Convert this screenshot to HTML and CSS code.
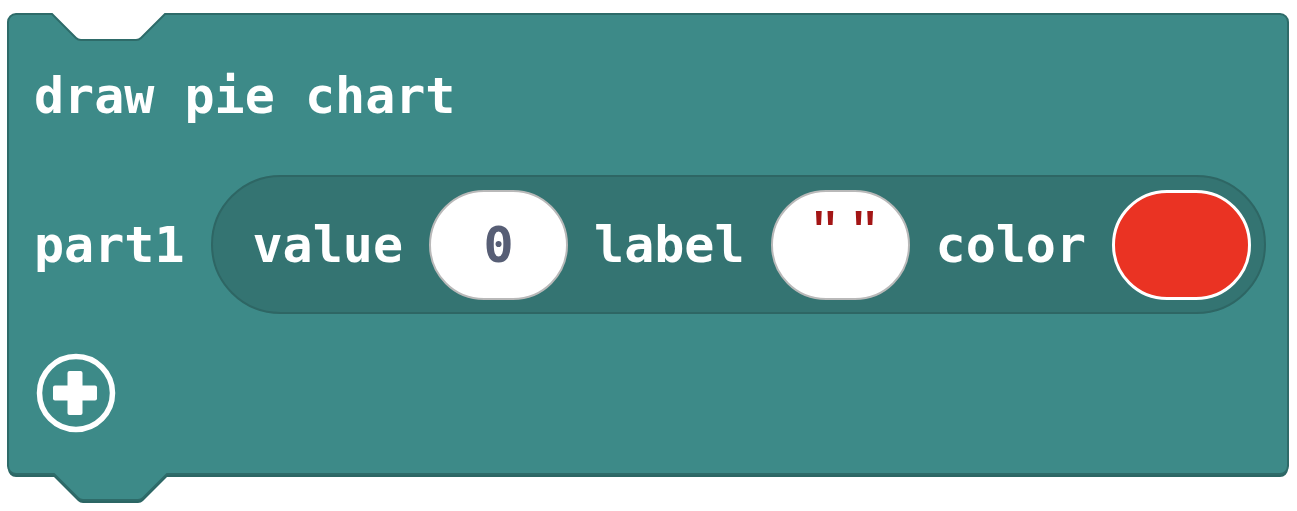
FILE: index.html
```html
<!DOCTYPE html>
<html>
<head>
<meta charset="utf-8">
<link rel="stylesheet" href="styles.css">
</head>
<body>
<div class="stage">
  <div class="block">
    <svg class="shape" width="1284" height="494" viewBox="0 0 1284 494">
      <path class="shadow" transform="translate(0,3)" d="M1,9 A8,8 0 0 1 9,1 H45 L69,25 Q71,27 74,27 H129 Q132,27 134,25 L158,1 H1273 A8,8 0 0 1 1281,9 V453 A8,8 0 0 1 1273,461 H160 L136,485 Q134,487 131,487 H76 Q73,487 71,485 L47,461 H9 A8,8 0 0 1 1,453 Z"/>
      <path class="body" d="M1,9 A8,8 0 0 1 9,1 H45 L69,25 Q71,27 74,27 H129 Q132,27 134,25 L158,1 H1273 A8,8 0 0 1 1281,9 V453 A8,8 0 0 1 1273,461 H160 L136,485 Q134,487 131,487 H76 Q73,487 71,485 L47,461 H9 A8,8 0 0 1 1,453 Z"/>
    </svg>
    <div class="content">
      <div class="title">draw pie chart</div>
      <div class="part-row">
        <span class="word">part1</span>
        <div class="pill">
          <span class="word">value</span>
          <div class="field num">0</div>
          <span class="word">label</span>
          <div class="field text"><span class="q">"</span><span class="q">"</span></div>
          <span class="word">color</span>
          <div class="field swatch"></div>
        </div>
      </div>
      <div class="add-row">
        <svg class="plus" width="80" height="80" viewBox="0 0 80 80">
          <circle cx="40" cy="40" r="36.5" fill="none" stroke="#ffffff" stroke-width="5.5"/>
          <rect x="17" y="32.5" width="44" height="15" rx="2" fill="#ffffff"/>
          <rect x="31.5" y="18" width="15" height="44" rx="2" fill="#ffffff"/>
        </svg>
      </div>
    </div>
  </div>
</div>
</body>
</html>
```

FILE: styles.css
```css
html, body {
  margin: 0;
  padding: 0;
  background: #ffffff;
}

.stage {
  padding: 13px 0 4px 7px;
}

.block {
  position: relative;
  width: 1284px;
  height: 494px;
}

.shape {
  position: absolute;
  left: 0;
  top: 0;
  overflow: visible;
}

.shape .shadow {
  fill: #2c6664;
}

.shape .body {
  fill: #3d8a88;
  stroke: #2e6b69;
  stroke-width: 2;
}

.content {
  position: relative;
  display: flex;
  flex-direction: column;
  align-items: flex-start;
  padding: 54px 0 0 27px;
  font-family: "DejaVu Sans Mono", "Liberation Mono", monospace;
  font-weight: bold;
  font-size: 50px;
  line-height: 58px;
  color: #ffffff;
}

.title {
  height: 58px;
  white-space: pre;
}

.part-row {
  display: flex;
  align-items: center;
  gap: 26px;
  margin-top: 50px;
}

.word {
  white-space: pre;
}

.pill {
  display: flex;
  align-items: center;
  gap: 26px;
  height: 135px;
  padding: 0 13px 0 40px;
  background: #347472;
  border: 2px solid #2e6664;
  border-radius: 70px;
}

.field {
  box-sizing: border-box;
  width: 139px;
  height: 110px;
  border-radius: 55px;
  display: flex;
  justify-content: center;
  align-items: center;
}

.num {
  background: #ffffff;
  border: 2px solid #b9b9b9;
  color: #575e75;
}

.text {
  background: #ffffff;
  border: 2px solid #b9b9b9;
  align-items: flex-start;
  padding-top: 12px;
  padding-left: 9px;
  gap: 17px;
}

.q {
  font-family: "Liberation Sans", Arial, sans-serif;
  font-weight: normal;
  font-size: 64px;
  line-height: 60px;
  color: #a31515;
}

.swatch {
  background: #ea3323;
  border: 3px solid #ffffff;
}

.add-row {
  margin-top: 39px;
  margin-left: 2px;
  height: 80px;
}

.plus {
  display: block;
}
```
